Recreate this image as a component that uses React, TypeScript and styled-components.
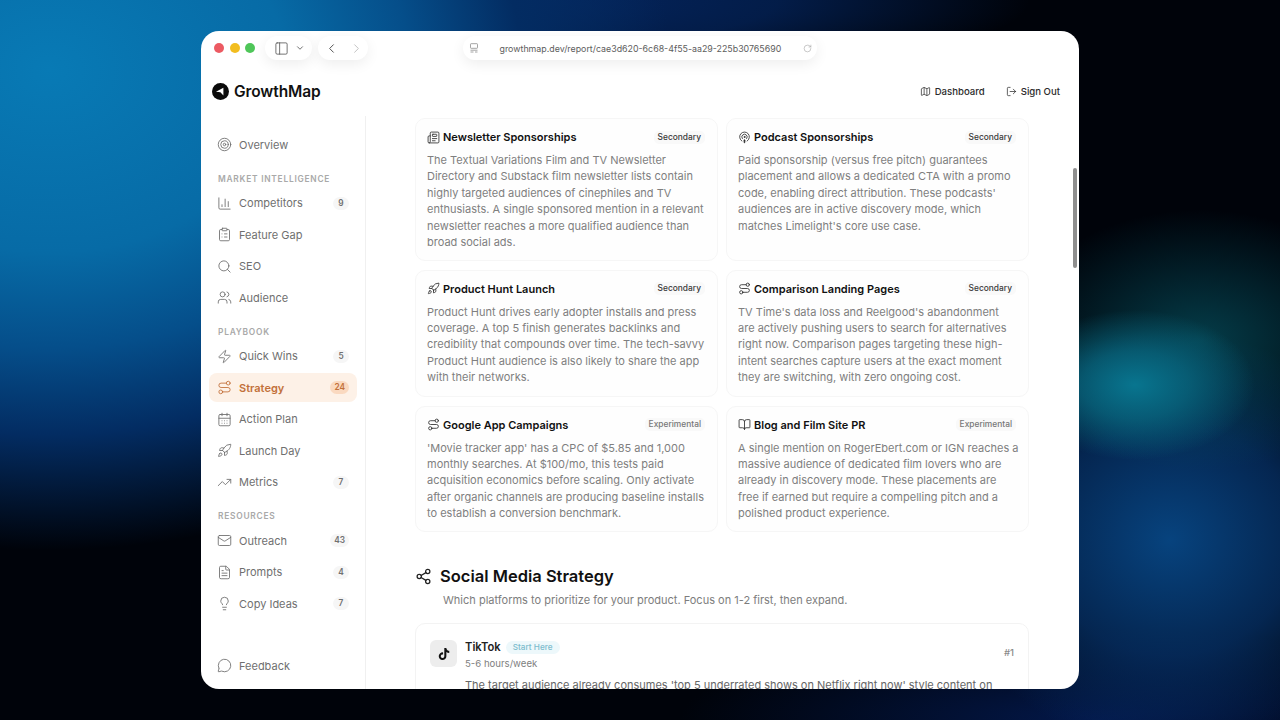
import React from 'react';
import styled, { createGlobalStyle } from 'styled-components';
import {
  Target, ChartColumn, ClipboardList, Search, Users, Zap, Route, CalendarDays, Rocket,
  TrendingUp, Mail, FileText, Lightbulb, MessageCircle, Map as MapIcon, LogOut, Newspaper,
  Podcast, Share2, BookOpen, PanelLeft, ChevronDown, ChevronLeft, ChevronRight, RotateCw,
} from 'lucide-react';
import { FaTiktok } from 'react-icons/fa';

const GlobalStyle = createGlobalStyle`
  html, body { margin: 0; height: 100%; }
  body {
    font-family: Inter, "Liberation Sans", sans-serif;
    overflow: hidden;
    background:
      radial-gradient(ellipse 120px 75px at 1135px 385px, #08758f 0%, rgba(8, 105, 130, 0.75) 45%, rgba(6, 70, 90, 0) 100%),
      radial-gradient(ellipse 190px 130px at 1200px 340px, rgba(6, 85, 100, 0.7) 0%, rgba(6, 60, 80, 0) 100%),
      radial-gradient(ellipse 230px 210px at 1170px 540px, #07437e 0%, rgba(6, 50, 105, 0.75) 55%, rgba(3, 20, 60, 0) 100%),
      radial-gradient(ellipse 420px 90px at 1100px 720px, #03184a 0%, rgba(3, 20, 60, 0) 100%),
      radial-gradient(ellipse 620px 480px at 50px 70px, #087ab5 0%, #076ba6 38%, #054e8a 58%, #032c62 76%, rgba(2, 14, 40, 0) 100%),
      radial-gradient(ellipse 560px 90px at 470px 0px, #042763 0%, rgba(4, 39, 99, 0.7) 55%, rgba(3, 20, 60, 0) 100%),
      #00030a;
  }
`;

const Desktop = styled.div`
  width: 1280px;
  height: 720px;
  padding: 31px 201px;
  box-sizing: border-box;
`;

const Window = styled.div`
  position: relative;
  width: 878px;
  height: 658px;
  background: #fff;
  border-radius: 18px;
  overflow: hidden;
  display: flex;
  flex-direction: column;
`;

const TitleBar = styled.div`
  height: 34px;
  flex: none;
  display: flex;
  align-items: center;
  padding: 0 0 0 13px;
  box-sizing: border-box;
`;

const Light = styled.span<{ $color: string }>`
  width: 10px;
  height: 10px;
  border-radius: 50%;
  background: ${p => p.$color};
  margin-right: 5.5px;
`;

const Pill = styled.div`
  height: 24px;
  background: #fff;
  border-radius: 12px;
  box-shadow: 0 4px 14px rgba(0, 0, 0, 0.07);
  display: flex;
  align-items: center;
  color: #555;
`;

const ViewPill = styled(Pill)`
  width: 47px;
  margin-left: 4px;
  padding-left: 9px;
  gap: 6px;
  box-sizing: border-box;
`;

const NavPill = styled(Pill)`
  width: 50px;
  margin-left: 6px;
  padding-left: 6px;
  gap: 10px;
  box-sizing: border-box;
`;

const UrlPill = styled(Pill)`
  width: 354px;
  margin-left: 95px;
  padding: 0 5px 0 6px;
  box-sizing: border-box;
`;

const UrlText = styled.span`
  font-size: 8.85px;
  color: #5d5d5d;
  margin-left: 21px;
  width: 303px;
  white-space: nowrap;
`;

const Header = styled.header`
  height: 51px;
  flex: none;
  display: flex;
  align-items: center;
  justify-content: space-between;
  padding: 1px 19px 0 11px;
  box-sizing: border-box;
`;

const Logo = styled.div`
  display: flex;
  align-items: center;
  gap: 5px;
  font-size: 15.5px;
  font-weight: 600;
  color: #111;
  letter-spacing: -0.1px;
`;

const HeaderLinks = styled.div`
  display: flex;
  gap: 21px;
`;

const HeaderLink = styled.span`
  display: flex;
  align-items: center;
  gap: 4px;
  font-size: 9.6px;
  font-weight: 500;
  color: #2b2b2b;
`;

const Body = styled.div`
  flex: 1;
  min-height: 0;
  display: flex;
`;

const Sidebar = styled.nav`
  width: 165px;
  flex: none;
  box-sizing: border-box;
  border-right: 1px solid #f0f0f0;
  padding: 14px 8px 9px;
  display: flex;
  flex-direction: column;
  gap: 2.5px;
`;

const SectionLabel = styled.div`
  font-size: 8.4px;
  font-weight: 600;
  letter-spacing: 0.75px;
  color: #a9a9a9;
  padding: 0 0 0 9px;
  height: 12px;
  line-height: 12px;
  margin: 11px 0 1.5px;
`;

const NavItem = styled.div<{ $active?: boolean; $bottom?: boolean }>`
  height: 29px;
  flex: none;
  display: flex;
  align-items: center;
  gap: 7px;
  padding: 0 8px;
  border-radius: 8px;
  font-size: 11px;
  font-weight: ${p => (p.$active ? 600 : 400)};
  color: ${p => (p.$active ? '#c2703a' : '#6f6f6f')};
  background: ${p => (p.$active ? '#fdf1e7' : 'transparent')};
  margin-top: ${p => (p.$bottom ? 'auto' : '0')};
  svg { flex: none; }
`;

const NavText = styled.span`
  flex: 1;
`;

const Count = styled.span<{ $active?: boolean }>`
  min-width: 8px;
  padding: 1px 4px;
  border-radius: 7px;
  text-align: center;
  font-size: 8.3px;
  line-height: 11px;
  font-weight: 600;
  color: ${p => (p.$active ? '#c2703a' : '#707070')};
  background: ${p => (p.$active ? '#fad9c0' : '#f6f6f6')};
`;

const Main = styled.main`
  flex: 1;
  min-width: 0;
  overflow: hidden;
  padding: 2px 0 0 49px;
`;

const CardGrid = styled.div`
  width: 614px;
  display: grid;
  grid-template-columns: 303px 303px;
  grid-template-rows: 142.5px 127px 126.5px;
  gap: 9px 8px;
`;

const Card = styled.article`
  border: 1px solid #f6f6f6;
  border-radius: 10px;
  padding: 10px 12px 0 11px;
  box-sizing: border-box;
  background: #fefefe;
  overflow: hidden;
`;

const CardHead = styled.div`
  display: flex;
  align-items: center;
  height: 16px;
  margin-bottom: 7px;
  color: #333;
`;

const CardTitle = styled.h3`
  flex: 1;
  margin: 0 0 0 3px;
  font-size: 11px;
  font-weight: 600;
  color: #111;
`;

const Tag = styled.span<{ $muted?: boolean }>`
  padding: 1px 4px;
  border-radius: 5px;
  background: #f9f9f9;
  font-size: 8.4px;
  line-height: 11px;
  font-weight: 500;
  color: ${p => (p.$muted ? '#777' : '#3a3a3a')};
`;

const CardText = styled.p`
  margin: 0;
  font-size: 11px;
  line-height: 16.45px;
  color: #7f7f7f;
  white-space: pre;
`;

const SectionHead = styled.div`
  display: flex;
  align-items: center;
  gap: 8px;
  margin: 33px 0 0;
  height: 22px;
  color: #222;
`;

const SectionTitle = styled.h2`
  margin: 0;
  font-size: 16.5px;
  font-weight: 600;
  color: #111;
`;

const SectionSub = styled.p`
  margin: 6px 0 0 28px;
  font-size: 11px;
  line-height: 14px;
  color: #7d7d7d;
`;

const PlatformCard = styled.article`
  width: 614px;
  box-sizing: border-box;
  margin-top: 16px;
  border: 1px solid #f3f3f3;
  border-radius: 10px;
  padding: 16px 14px;
`;

const PlatformHead = styled.div`
  display: flex;
  align-items: flex-start;
  gap: 8px;
`;

const PlatformIcon = styled.div`
  width: 27px;
  height: 27px;
  border-radius: 6px;
  background: #ededed;
  display: flex;
  align-items: center;
  justify-content: center;
  color: #111;
`;

const PlatformInfo = styled.div`
  flex: 1;
`;

const PlatformName = styled.div`
  display: flex;
  align-items: center;
  gap: 5px;
  font-size: 11.2px;
  line-height: 14px;
  font-weight: 600;
  color: #222;
`;

const StartTag = styled.span`
  padding: 1px 7px;
  border-radius: 7px;
  background: #edf8fb;
  font-size: 8.2px;
  line-height: 11px;
  font-weight: 500;
  color: #7cbccd;
`;

const PlatformHours = styled.div`
  margin-top: 3px;
  font-size: 9.6px;
  line-height: 13px;
  color: #808080;
`;

const Rank = styled.span`
  margin-top: 7px;
  font-size: 9.6px;
  font-weight: 500;
  color: #8a8a8a;
`;

const PlatformText = styled.p`
  margin: 7px 0 0 35px;
  font-size: 11px;
  line-height: 16px;
  color: #666;
  white-space: nowrap;
`;

const ScrollThumb = styled.div`
  position: absolute;
  top: 137px;
  right: 2px;
  width: 4px;
  height: 100px;
  border-radius: 2px;
  background: #8f8f8f;
`;

const UrlIcon = () => (
  <svg width="10" height="11" viewBox="0 0 10 11" fill="none" stroke="#9a9a9a" strokeWidth="0.9">
    <rect x="1.5" y="0.7" width="7" height="4.6" rx="0.6" />
    <path d="M1.5 7.2h7M1.5 9h3M6 9h2.5" />
  </svg>
);

const LogoMark = () => (
  <svg width="17" height="17" viewBox="0 0 17 17">
    <circle cx="8.5" cy="8.5" r="8.5" fill="#0b0b0b" />
    <path d="M4 8.7 L11.4 4.8 L11.4 12.4 L8.4 9.2 Z" fill="#fff" />
  </svg>
);

const navTop = [{ label: 'Overview', icon: Target }];
const navGroups = [
  {
    title: 'MARKET INTELLIGENCE',
    items: [
      { label: 'Competitors', icon: ChartColumn, count: 9 },
      { label: 'Feature Gap', icon: ClipboardList },
      { label: 'SEO', icon: Search },
      { label: 'Audience', icon: Users },
    ],
  },
  {
    title: 'PLAYBOOK',
    items: [
      { label: 'Quick Wins', icon: Zap, count: 5 },
      { label: 'Strategy', icon: Route, count: 24, active: true },
      { label: 'Action Plan', icon: CalendarDays },
      { label: 'Launch Day', icon: Rocket },
      { label: 'Metrics', icon: TrendingUp, count: 7 },
    ],
  },
  {
    title: 'RESOURCES',
    items: [
      { label: 'Outreach', icon: Mail, count: 43 },
      { label: 'Prompts', icon: FileText, count: 4 },
      { label: 'Copy Ideas', icon: Lightbulb, count: 7 },
    ],
  },
];

const cards = [
  {
    title: 'Newsletter Sponsorships', tag: 'Secondary', icon: Newspaper,
    text: 'The Textual Variations Film and TV Newsletter\nDirectory and Substack film newsletter lists contain\nhighly targeted audiences of cinephiles and TV\nenthusiasts. A single sponsored mention in a relevant\nnewsletter reaches a more qualified audience than\nbroad social ads.',
  },
  {
    title: 'Podcast Sponsorships', tag: 'Secondary', icon: Podcast,
    text: "Paid sponsorship (versus free pitch) guarantees\nplacement and allows a dedicated CTA with a promo\ncode, enabling direct attribution. These podcasts'\naudiences are in active discovery mode, which\nmatches Limelight's core use case.",
  },
  {
    title: 'Product Hunt Launch', tag: 'Secondary', icon: Rocket,
    text: 'Product Hunt drives early adopter installs and press\ncoverage. A top 5 finish generates backlinks and\ncredibility that compounds over time. The tech-savvy\nProduct Hunt audience is also likely to share the app\nwith their networks.',
  },
  {
    title: 'Comparison Landing Pages', tag: 'Secondary', icon: Route,
    text: "TV Time's data loss and Reelgood's abandonment\nare actively pushing users to search for alternatives\nright now. Comparison pages targeting these high-\nintent searches capture users at the exact moment\nthey are switching, with zero ongoing cost.",
  },
  {
    title: 'Google App Campaigns', tag: 'Experimental', icon: Route,
    text: "'Movie tracker app' has a CPC of $5.85 and 1,000\nmonthly searches. At $100/mo, this tests paid\nacquisition economics before scaling. Only activate\nafter organic channels are producing baseline installs\nto establish a conversion benchmark.",
  },
  {
    title: 'Blog and Film Site PR', tag: 'Experimental', icon: BookOpen,
    text: 'A single mention on RogerEbert.com or IGN reaches a\nmassive audience of dedicated film lovers who are\nalready in discovery mode. These placements are\nfree if earned but require a compelling pitch and a\npolished product experience.',
  },
];

export default function App() {
  return (
    <>
      <GlobalStyle />
      <Desktop>
        <Window>
          <TitleBar>
            <Light $color="#ec5a62" />
            <Light $color="#f2bd1f" />
            <Light $color="#4fc659" />
            <ViewPill>
              <PanelLeft size={15} strokeWidth={1.3} />
              <ChevronDown size={10} strokeWidth={2} />
            </ViewPill>
            <NavPill>
              <ChevronLeft size={15} strokeWidth={1.6} />
              <ChevronRight size={15} strokeWidth={1.6} color="#c4c4c4" />
            </NavPill>
            <UrlPill>
              <UrlIcon />
              <UrlText>growthmap.dev/report/cae3d620-6c68-4f55-aa29-225b30765690</UrlText>
              <RotateCw size={9} strokeWidth={1.4} color="#999" />
            </UrlPill>
          </TitleBar>
          <Header>
            <Logo>
              <LogoMark />
              GrowthMap
            </Logo>
            <HeaderLinks>
              <HeaderLink><MapIcon size={11} strokeWidth={1.6} />Dashboard</HeaderLink>
              <HeaderLink><LogOut size={11} strokeWidth={1.6} />Sign Out</HeaderLink>
            </HeaderLinks>
          </Header>
          <Body>
            <Sidebar>
              {navTop.map(item => (
                <NavItem key={item.label}>
                  <item.icon size={15} strokeWidth={1.4} />
                  <NavText>{item.label}</NavText>
                </NavItem>
              ))}
              {navGroups.map(group => (
                <React.Fragment key={group.title}>
                  <SectionLabel>{group.title}</SectionLabel>
                  {group.items.map(item => (
                    <NavItem key={item.label} $active={item.active}>
                      <item.icon size={15} strokeWidth={1.4} />
                      <NavText>{item.label}</NavText>
                      {item.count !== undefined && <Count $active={item.active}>{item.count}</Count>}
                    </NavItem>
                  ))}
                </React.Fragment>
              ))}
              <NavItem $bottom>
                <MessageCircle size={15} strokeWidth={1.4} />
                <NavText>Feedback</NavText>
              </NavItem>
            </Sidebar>
            <Main>
              <CardGrid>
                {cards.map(card => (
                  <Card key={card.title}>
                    <CardHead>
                      <card.icon size={13} strokeWidth={1.6} />
                      <CardTitle>{card.title}</CardTitle>
                      <Tag $muted={card.tag === 'Experimental'}>{card.tag}</Tag>
                    </CardHead>
                    <CardText>{card.text}</CardText>
                  </Card>
                ))}
              </CardGrid>
              <SectionHead>
                <Share2 size={17} strokeWidth={1.8} />
                <SectionTitle>Social Media Strategy</SectionTitle>
              </SectionHead>
              <SectionSub>Which platforms to prioritize for your product. Focus on 1-2 first, then expand.</SectionSub>
              <PlatformCard>
                <PlatformHead>
                  <PlatformIcon><FaTiktok size={12} /></PlatformIcon>
                  <PlatformInfo>
                    <PlatformName>TikTok<StartTag>Start Here</StartTag></PlatformName>
                    <PlatformHours>5-6 hours/week</PlatformHours>
                  </PlatformInfo>
                  <Rank>#1</Rank>
                </PlatformHead>
                <PlatformText>The target audience already consumes 'top 5 underrated shows on Netflix right now' style content on</PlatformText>
              </PlatformCard>
            </Main>
          </Body>
          <ScrollThumb />
        </Window>
      </Desktop>
    </>
  );
}
